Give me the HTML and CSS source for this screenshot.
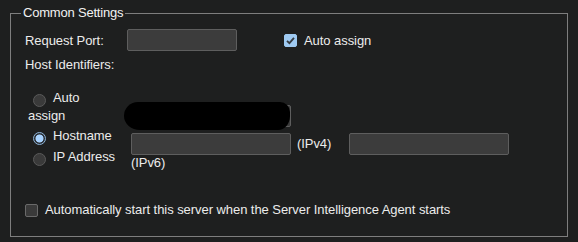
FILE: index.html
```html
<!DOCTYPE html>
<html lang="en">
<head>
  <meta charset="UTF-8" />
  <title>Common Settings</title>
  <link rel="stylesheet" href="styles.css">
</head>
<body>

  <fieldset class="settings">
    <legend>Common Settings</legend>

    <!-- port -->
    <div class="port-row">
      <span class="port-label">Request Port:</span>
      <span class="text-input port-input"></span>
      <span class="check-box checked port-check">
        <svg width="13" height="13" viewBox="0 0 13 13"><path d="M3 6.8 L5.4 9.2 L10 3.8" fill="none" stroke="#343a40" stroke-width="1.8"/></svg>
      </span>
      <span>Auto assign</span>
    </div>

    <div class="host-label">Host Identifiers:</div>

    <!-- host identifiers -->
    <div class="host-row">
      <div class="radio-col">
        <div class="option"><span class="radio"></span>Auto assign</div>
        <div class="option"><span class="radio selected"></span>Hostname</div>
        <div class="option"><span class="radio"></span>IP Address</div>
      </div>
      <div class="addr-col">
        <div class="hidden-field">
          <span class="text-input addr-input"></span>
          <span class="scribble"></span>
        </div>
        <div class="addr-line">
          <span class="text-input addr-input"></span>
          <span class="ipv4">(IPv4)</span>
          <span class="text-input addr-input ipv6-input"></span>
          <span>(IPv6)</span>
        </div>
      </div>
    </div>

    <div class="auto-start">
      <span class="check-box"></span>
      <span>Automatically start this server when the Server Intelligence Agent starts</span>
    </div>
  </fieldset>

</body>
</html>
```

FILE: styles.css
```css
body {
  margin: 0;
  background: #1e1f1f;
  font-family: "Liberation Sans", Arial, sans-serif;
  font-size: 13px;
  letter-spacing: -0.06px;
  color: #ececec;
}

.settings {
  margin: 5px 10px 0;
  padding: 8px 14px 18px;
  border: 1px solid #7e7e7e;
  min-width: 0;
}

.settings legend {
  padding: 0 2px;
  margin-left: -4px;
  line-height: 16px;
  color: #f2f2f2;
  letter-spacing: -0.2px;
}

.port-row {
  display: flex;
  align-items: center;
  height: 22px;
}

.port-label {
  width: 102px;
}

.text-input {
  display: block;
  box-sizing: border-box;
  height: 22px;
  background: #3c3c3c;
  border: 1px solid #5e5e5e;
  border-radius: 2px;
}

.port-input {
  width: 110px;
}

.check-box {
  display: block;
  box-sizing: border-box;
  width: 13px;
  height: 13px;
  margin-right: 7px;
  background: #3a3a3a;
  border: 1px solid #6a6a6a;
  border-radius: 2px;
}

.check-box svg {
  display: block;
  margin: -1px;
}

.check-box.checked {
  background: #9fcaf2;
  border-color: #9fcaf2;
}

.port-check {
  margin-left: 47px;
}

.host-label {
  margin-top: 6px;
  line-height: 16px;
}

.host-row {
  display: flex;
  margin-top: 16px;
}

.radio-col {
  width: 88px;
  margin-left: 3px;
  line-height: 17px;
}

.option + .option {
  margin-top: 3px;
}

.radio {
  display: inline-block;
  box-sizing: border-box;
  width: 13px;
  height: 13px;
  margin: 0 7px 0 5px;
  vertical-align: -5px;
  border-radius: 50%;
  background: #3a3a3a;
  border: 1px solid #5a5a5a;
}

.radio.selected {
  background: radial-gradient(circle, #a9d3ff 0 3.6px, #2b3036 4.4px);
  border-color: #8db3d8;
}

.addr-col {
  width: 400px;
  margin-left: 15px;
  padding-top: 16px;
  line-height: 16px;
}

.hidden-field {
  position: relative;
  margin-bottom: 6px;
}

.scribble {
  position: absolute;
  left: -7px;
  top: -3px;
  width: 166px;
  height: 28px;
  background: #000;
  border-radius: 14px 10px 12px 16px / 14px 10px 14px 14px;
}

.addr-line {
  display: flex;
  flex-wrap: wrap;
  align-items: center;
}

.addr-input {
  width: 160px;
}

.ipv4 {
  margin-left: 6px;
}

.ipv6-input {
  margin-left: 18px;
}

.auto-start {
  display: flex;
  align-items: center;
  margin-top: 31px;
  line-height: 16px;
}
```
